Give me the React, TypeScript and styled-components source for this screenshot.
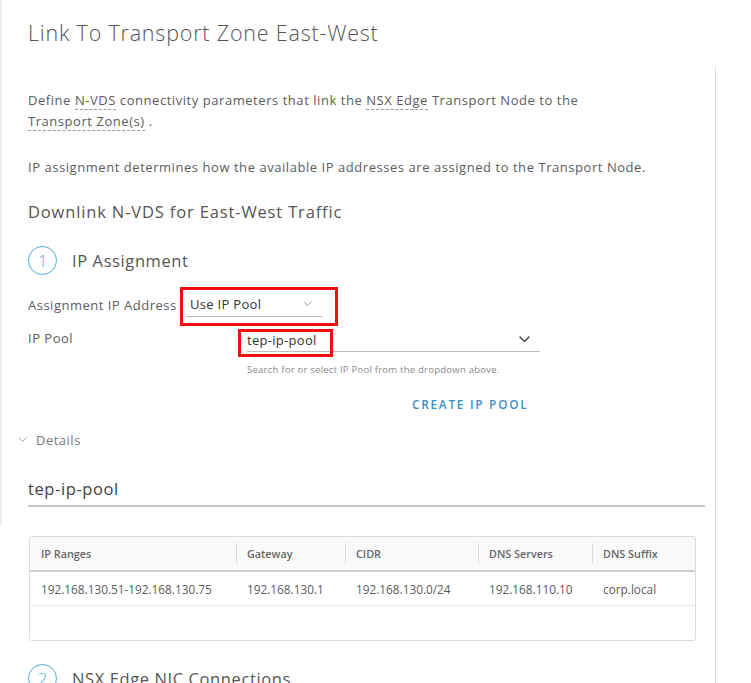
import React from "react";
import styled, { createGlobalStyle } from "styled-components";

const Global = createGlobalStyle`
  html, body { margin: 0; padding: 0; background: #fff; }
  body { font-family: "Open Sans", "Noto Sans", sans-serif; color: #565656; overflow: hidden; }
  * { box-sizing: border-box; }
`;

const Page = styled.div`
  position: relative;
  width: 751px;
  height: 683px;
  overflow: hidden;
  &::before {
    content: "";
    position: absolute;
    left: 0;
    top: 0;
    width: 2px;
    height: 525px;
    background: #ececec;
  }
`;

const Header = styled.div`
  padding: 19px 0 0 28px;
  height: 67px;
`;

const Title = styled.h1`
  margin: 0;
  font-size: 21.5px;
  line-height: 28px;
  font-weight: 300;
  letter-spacing: 0.8px;
  color: #555;
`;

const Body = styled.div`
  width: 716px;
  border-right: 1px solid #dcdcdc;
  padding: 23px 0 0 28px;
  height: 616px;
`;

const Para = styled.p<{ $mt?: number }>`
  margin: ${(p) => p.$mt ?? 0}px 0 0 0;
  font-size: 13px;
  line-height: 21px;
  letter-spacing: 0.55px;
  color: #5c5c5c;
  width: 660px;
`;

const Term = styled.span`
  border-bottom: 1px dashed #9a9a9a;
`;

const SubHeading = styled.h2`
  margin: 22px 0 0 0;
  font-size: 16.5px;
  line-height: 24px;
  font-weight: 400;
  letter-spacing: 0.85px;
  color: #555;
`;

const StepRow = styled.div<{ $mt: number }>`
  display: flex;
  align-items: center;
  gap: 15px;
  margin-top: ${(p) => p.$mt}px;
  height: 28px;
`;

const StepCircle = styled.div`
  width: 29px;
  height: 29px;
  border-radius: 50%;
  border: 1.6px solid #49afd9;
  color: #49afd9;
  display: flex;
  align-items: center;
  justify-content: center;
  font-size: 17px;
  font-weight: 300;
`;

const StepTitle = styled.div`
  font-size: 16.5px;
  font-weight: 400;
  letter-spacing: 0.6px;
  color: #555;
`;

const FormRow = styled.div<{ $mt: number; $labelW: number }>`
  display: grid;
  grid-template-columns: ${(p) => p.$labelW}px auto;
  align-items: start;
  margin-top: ${(p) => p.$mt}px;
`;

const Label = styled.div`
  font-size: 13px;
  line-height: 24px;
  letter-spacing: 0.5px;
  color: #5c5c5c;
  white-space: nowrap;
`;

const Control = styled.div`
  position: relative;
`;

const SelectBox = styled.div<{ $w: number; $h: number }>`
  position: relative;
  width: ${(p) => p.$w}px;
  height: ${(p) => p.$h}px;
  border-bottom: 1px solid #bdbdbd;
  display: flex;
  align-items: center;
  justify-content: space-between;
  font-size: 13px;
  letter-spacing: 0.3px;
  color: #333;
`;

const PlainSelect = styled(SelectBox)`
  padding: 0 10px 2px 4px;
`;

const InputBox = styled(SelectBox)`
  padding: 4px 10px 2px 0;
`;

const Annotation = styled.div<{ $l: number; $t: number; $w: number; $h: number }>`
  position: absolute;
  left: ${(p) => p.$l}px;
  top: ${(p) => p.$t}px;
  width: ${(p) => p.$w}px;
  height: ${(p) => p.$h}px;
  border: 3px solid #f20f0f;
  pointer-events: none;
`;

const Helper = styled.div`
  margin: 11px 0 0 219px;
  font-size: 9.6px;
  line-height: 13px;
  letter-spacing: 0.2px;
  color: #8c8c8c;
`;

const LinkButton = styled.div`
  margin: 20px 0 0 384px;
  font-size: 11.8px;
  font-weight: 600;
  letter-spacing: 1.75px;
  color: #3b8fc4;
`;

const Disclosure = styled.div`
  display: flex;
  align-items: center;
  gap: 9px;
  margin: 19px 0 0 -10px;
  font-size: 13px;
  letter-spacing: 0.5px;
  color: #777;
`;

const PoolName = styled.div`
  margin-top: 28px;
  width: 677px;
  font-size: 16.5px;
  line-height: 24px;
  letter-spacing: 0.6px;
  color: #444;
  padding-bottom: 4px;
  border-bottom: 2px solid #c8c8c8;
`;

const Table = styled.div`
  margin: 29px 0 0 1px;
  width: 667px;
  border: 1px solid #dcdcdc;
  border-radius: 3px;
  overflow: hidden;
`;

const Row = styled.div<{ $head?: boolean }>`
  display: grid;
  grid-template-columns: 206px 109px 133px 114px 1fr;
  height: ${(p) => (p.$head ? 35 : 34)}px;
  background: ${(p) => (p.$head ? "#fafafa" : "#fff")};
  border-bottom: ${(p) => (p.$head ? "2px solid #cfcfcf" : "1px solid #e8e8e8")};
  &:last-child { border-bottom: none; }
`;

const Cell = styled.div<{ $head?: boolean; $sep?: boolean }>`
  display: flex;
  align-items: center;
  padding-left: 11px;
  font-size: ${(p) => (p.$head ? 10.8 : 11.8)}px;
  font-weight: ${(p) => (p.$head ? 600 : 400)};
  color: ${(p) => (p.$head ? "#666" : "#5c5c5c")};
  white-space: nowrap;
  position: relative;
  ${(p) =>
    p.$sep
      ? `&::before { content: ""; position: absolute; left: 0; top: 6px; bottom: 6px; width: 1px; background: #dedede; }`
      : ""}
`;

const Chevron = ({ size = 10, color = "#888", sw = 1.2 }: { size?: number; color?: string; sw?: number }) => (
  <svg width={size} height={size * 0.6} viewBox="0 0 10 6" fill="none">
    <path d="M1 1 L5 5 L9 1" stroke={color} strokeWidth={sw} strokeLinecap="round" strokeLinejoin="round" />
  </svg>
);

const headers = ["IP Ranges", "Gateway", "CIDR", "DNS Servers", "DNS Suffix"];
const data = ["192.168.130.51-192.168.130.75", "192.168.130.1", "192.168.130.0/24", "192.168.110.10", "corp.local"];

export default function App() {
  return (
    <Page>
      <Global />
      <Header>
        <Title>Link To Transport Zone East-West</Title>
      </Header>
      <Body>
        <Para>
          Define <Term>N-VDS</Term> connectivity parameters that link the <Term>NSX Edge</Term> Transport Node to the
          <br />
          <Term>Transport Zone(s)</Term> .
        </Para>
        <Para $mt={25}>IP assignment determines how the available IP addresses are assigned to the Transport Node.</Para>
        <SubHeading>Downlink N-VDS for East-West Traffic</SubHeading>
        <StepRow $mt={22}>
          <StepCircle>1</StepCircle>
          <StepTitle>IP Assignment</StepTitle>
        </StepRow>
        <FormRow $mt={19} $labelW={158}>
          <Label>Assignment IP Address</Label>
          <Control>
            <PlainSelect $w={136} $h={24}>
              <span>Use IP Pool</span>
              <Chevron size={9} color="#999" sw={1} />
            </PlainSelect>
            <Annotation $l={-6} $t={-6} $w={158} $h={39} />
          </Control>
        </FormRow>
        <FormRow $mt={9} $labelW={219}>
          <Label>IP Pool</Label>
          <Control>
            <InputBox $w={293} $h={26}>
              <span>tep-ip-pool</span>
              <Chevron size={11} color="#555" sw={1.5} />
            </InputBox>
            <Annotation $l={-9} $t={3} $w={95} $h={28} />
          </Control>
        </FormRow>
        <Helper>Search for or select IP Pool from the dropdown above.</Helper>
        <LinkButton>CREATE IP POOL</LinkButton>
        <Disclosure>
          <Chevron size={9} color="#999" sw={1} />
          <span>Details</span>
        </Disclosure>
        <PoolName>tep-ip-pool</PoolName>
        <Table>
          <Row $head>
            {headers.map((h, i) => (
              <Cell key={h} $head $sep={i > 0}>
                {h}
              </Cell>
            ))}
          </Row>
          <Row>
            {data.map((d) => (
              <Cell key={d}>{d}</Cell>
            ))}
          </Row>
          <Row>
            <Cell />
          </Row>
        </Table>
        <StepRow $mt={23}>
          <StepCircle>2</StepCircle>
          <StepTitle>NSX Edge NIC Connections</StepTitle>
        </StepRow>
      </Body>
    </Page>
  );
}
